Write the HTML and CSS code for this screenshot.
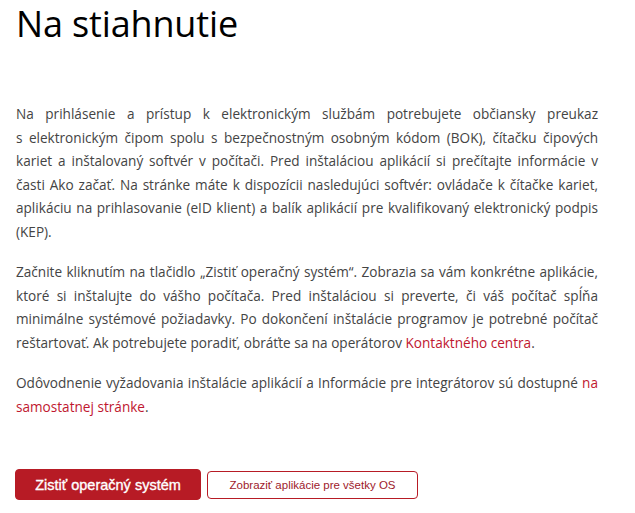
FILE: index.html
```html
<!DOCTYPE html>
<html lang="sk">
<head>
<meta charset="utf-8">
<title>Na stiahnutie</title>
<link rel="stylesheet" href="styles.css">
</head>
<body>
<main class="page">
  <h1 class="title">Na stiahnutie</h1>
  <div class="content">
    <p class="text">Na prihlásenie a prístup k elektronickým službám potrebujete občiansky preukaz s&nbsp;elektronickým čipom spolu s bezpečnostným osobným kódom (BOK), čítačku čipových kariet a inštalovaný softvér v počítači. Pred inštaláciou aplikácií si prečítajte informácie v časti Ako začať. Na stránke máte k dispozícii nasledujúci softvér: ovládače k čítačke kariet, aplikáciu na prihlasovanie (eID klient) a balík aplikácií pre kvalifikovaný elektronický podpis (KEP).</p>
    <p class="text">Začnite kliknutím na tlačidlo „Zistiť operačný systém“. Zobrazia sa vám konkrétne aplikácie, ktoré si inštalujte do vášho počítača. Pred inštaláciou si preverte, či váš počítač spĺňa minimálne systémové požiadavky. Po dokončení inštalácie programov je potrebné počítač reštartovať. Ak potrebujete poradiť, obráťte sa na operátorov <a class="link" href="#">Kontaktného centra</a>.</p>
    <p class="text">Odôvodnenie vyžadovania inštalácie aplikácií a Informácie pre integrátorov sú dostupné <a class="link" href="#">na samostatnej stránke</a>.</p>
  </div>
  <div class="actions">
    <button class="btn btn-primary" type="button">Zistiť operačný systém</button>
    <button class="btn btn-outline" type="button">Zobraziť aplikácie pre všetky OS</button>
  </div>
</main>
</body>
</html>
```
FILE: styles.css
```css
html, body {
  margin: 0;
  padding: 0;
  background: #fff;
}
.page {
  width: 582px;
  padding: 0 16px;
  font-family: "Open Sans", "Noto Sans", sans-serif;
  color: #444;
}
.title {
  margin: 0;
  padding-top: 1px;
  font-size: 36px;
  letter-spacing: -0.15px;
  font-weight: 400;
  line-height: 46px;
  color: #000;
}
.content {
  padding-top: 55px;
}
.text {
  margin: 0 0 16.5px;
  font-size: 13.6px;
  line-height: 23.6px;
  text-align: justify;
}
.link {
  color: #c0172f;
  text-decoration: none;
}
.actions {
  display: flex;
  align-items: center;
  gap: 6px;
  margin-top: 51px;
  margin-left: -1px;
}
.btn {
  font-family: "Liberation Sans", Arial, sans-serif;
  border-radius: 4px;
  cursor: pointer;
  padding: 0;
}
.btn-primary {
  width: 186px;
  height: 31px;
  background: #b71b25;
  border: 1px solid #b71b25;
  color: #fff;
  font-weight: 400;
  font-size: 14.5px;
  -webkit-text-stroke: 0.35px #fff;
}
.btn-outline {
  width: 211px;
  height: 28px;
  background: #fff;
  border: 1px solid #b71b25;
  color: #9e1a2b;
  font-size: 11.5px;
}
```
